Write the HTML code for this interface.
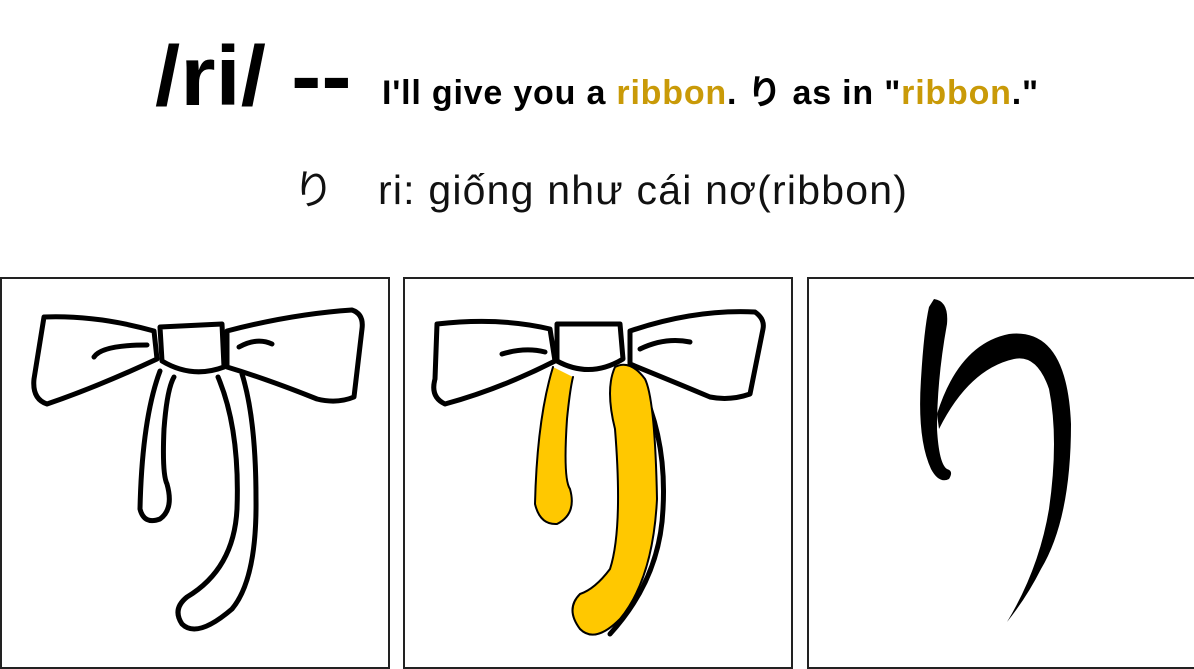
<!DOCTYPE html>
<html><head><meta charset="utf-8"><style>
html,body{margin:0;padding:0;background:#fff;width:1194px;height:669px;overflow:hidden;position:relative;font-family:"Liberation Sans","Noto Sans CJK JP",sans-serif}
.big{position:absolute;left:155px;top:34px;font-size:84px;font-weight:bold;line-height:84px;transform:scaleX(1.08);transform-origin:left top;white-space:nowrap}
.sub{position:absolute;left:382px;top:73px;font-size:34px;font-weight:bold;white-space:nowrap;line-height:40px;letter-spacing:0.8px}
.y{color:#c99a08}
.vi{position:absolute;top:165px;font-size:41px;white-space:nowrap;color:#111;line-height:50px}
.p{position:absolute;top:277px;width:386px;height:388px;border:2px solid #222;background:#fff}
svg{position:absolute;left:0;top:0}
</style></head><body>
<div class="big">/ri/ --</div>
<div class="sub">I'll give you a <span class="y">ribbon</span>. り as in "<span class="y">ribbon</span>."</div>
<div class="vi" style="left:293px">り</div>
<div class="vi" style="left:378px;letter-spacing:1.2px">ri: giống như cái nơ(ribbon)</div>

<div class="p" style="left:0">
<svg width="386" height="388" viewBox="0 0 386 388" fill="#fff" stroke="#000" stroke-width="5" stroke-linejoin="round" stroke-linecap="round">
<path d="M42,38 Q95,36 152,52 L155,80 Q95,108 45,125 Q30,120 32,100 Z"/>
<path d="M225,52 Q290,35 350,31 Q362,35 360,50 L352,118 Q335,125 315,120 Q265,100 225,88 Z"/>
<path d="M158,48 L220,45 L222,88 Q190,100 160,82 Z"/>
<path d="M92,78 Q100,66 145,66" fill="none"/>
<path d="M237,68 Q255,58 270,65" fill="none"/>
<path d="M158,92 Q140,140 138,230 Q142,246 158,240 Q172,230 165,205 Q160,195 162,150 Q165,110 172,98" />
<path d="M216,98 Q238,150 235,230 Q232,290 185,318 Q170,330 180,345 Q195,360 230,330 Q255,300 254,220 Q254,140 240,95" />
</svg>
</div>

<div class="p" style="left:403px">
<svg width="386" height="388" viewBox="0 0 386 388" fill="#fff" stroke="#000" stroke-width="5" stroke-linejoin="round" stroke-linecap="round">
<path d="M235,105 Q262,160 258,230 Q255,300 205,355" fill="none"/>
<path d="M32,45 Q95,38 145,50 L150,82 Q95,110 40,125 Q25,118 30,100 Z"/>
<path d="M225,52 Q290,30 350,33 Q360,40 358,50 L345,115 Q325,122 305,118 Q262,100 225,85 Z"/>
<path d="M152,45 L215,45 L218,80 Q185,100 152,82 Z"/>
<path d="M97,75 Q120,68 140,73" fill="none"/>
<path d="M235,70 Q260,58 285,63" fill="none"/>
<path d="M148,88 Q132,140 130,225 Q135,246 152,245 Q172,235 165,210 Q158,200 162,140 Q165,110 168,98" fill="#ffc800" stroke-width="2"/>
<path d="M210,88 Q200,110 210,150 Q218,250 205,290 Q190,310 175,315 Q160,330 175,350 Q190,365 215,340 Q248,300 252,220 Q250,120 240,100 Q225,80 210,88 Z" fill="#ffc800" stroke-width="2"/>
</svg>
</div>

<div class="p" style="left:807px;width:390px">
<svg width="388" height="388" viewBox="0 0 388 388">
<path d="M125,20 Q140,22 138,45 Q128,100 128,150 Q130,185 138,190 Q145,192 140,200 Q130,205 122,190 Q108,160 112,100 Q115,50 120,28 Z" fill="#000"/>
<path d="M128,135 Q150,65 200,55 Q258,48 262,145 Q262,240 232,290 Q218,318 198,343 Q230,290 240,230 Q250,160 240,110 Q228,75 205,80 Q160,90 130,150 Z" fill="#000"/>
</svg>
</div>
</body></html>
